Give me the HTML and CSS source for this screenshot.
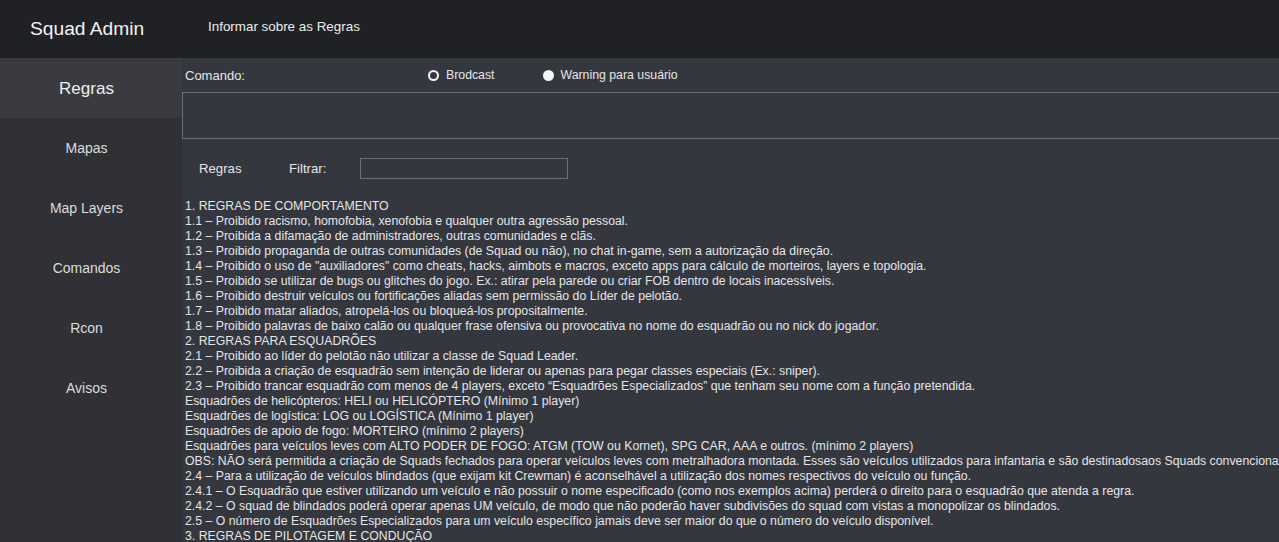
FILE: index.html
```html
<!DOCTYPE html>
<html lang="pt">
<head>
<meta charset="utf-8">
<title>Squad Admin</title>
<link rel="stylesheet" href="styles.css">
</head>
<body>
<header class="topbar">
  <div class="brand">Squad Admin</div>
  <div class="page-title">Informar sobre as Regras</div>
</header>
<div class="layout">
  <nav class="sidebar">
    <a class="nav-item active">Regras</a>
    <a class="nav-item">Mapas</a>
    <a class="nav-item">Map Layers</a>
    <a class="nav-item">Comandos</a>
    <a class="nav-item">Rcon</a>
    <a class="nav-item">Avisos</a>
  </nav>
  <main class="main">
    <div class="command-row">
      <span class="command-label">Comando:</span>
      <label class="radio"><span class="dot dot-empty"></span>Brodcast</label>
      <label class="radio"><span class="dot dot-full"></span>Warning para usuário</label>
    </div>
    <div class="command-box"></div>
    <div class="filter-row">
      <span class="filter-title">Regras</span>
      <span class="filter-label">Filtrar:</span>
      <div class="filter-input"></div>
    </div>
    <div class="rules">
      <div>1. REGRAS DE COMPORTAMENTO</div>
      <div>1.1 – Proibido racismo, homofobia, xenofobia e qualquer outra agressão pessoal.</div>
      <div>1.2 – Proibida a difamação de administradores, outras comunidades e clãs.</div>
      <div>1.3 – Proibido propaganda de outras comunidades (de Squad ou não), no chat in-game, sem a autorização da direção.</div>
      <div>1.4 – Proibido o uso de "auxiliadores" como cheats, hacks, aimbots e macros, exceto apps para cálculo de morteiros, layers e topologia.</div>
      <div>1.5 – Proibido se utilizar de bugs ou glitches do jogo. Ex.: atirar pela parede ou criar FOB dentro de locais inacessíveis.</div>
      <div>1.6 – Proibido destruir veículos ou fortificações aliadas sem permissão do Líder de pelotão.</div>
      <div>1.7 – Proibido matar aliados, atropelá-los ou bloqueá-los propositalmente.</div>
      <div>1.8 – Proibido palavras de baixo calão ou qualquer frase ofensiva ou provocativa no nome do esquadrão ou no nick do jogador.</div>
      <div>2. REGRAS PARA ESQUADRÕES</div>
      <div>2.1 – Proibido ao líder do pelotão não utilizar a classe de Squad Leader.</div>
      <div>2.2 – Proibida a criação de esquadrão sem intenção de liderar ou apenas para pegar classes especiais (Ex.: sniper).</div>
      <div>2.3 – Proibido trancar esquadrão com menos de 4 players, exceto “Esquadrões Especializados” que tenham seu nome com a função pretendida.</div>
      <div>Esquadrões de helicópteros: HELI ou HELICÓPTERO (Mínimo 1 player)</div>
      <div>Esquadrões de logística: LOG ou LOGÍSTICA (Mínimo 1 player)</div>
      <div>Esquadrões de apoio de fogo: MORTEIRO (mínimo 2 players)</div>
      <div>Esquadrões para veículos leves com ALTO PODER DE FOGO: ATGM (TOW ou Kornet), SPG CAR, AAA e outros. (mínimo 2 players)</div>
      <div>OBS: NÃO será permitida a criação de Squads fechados para operar veículos leves com metralhadora montada. Esses são veículos utilizados para infantaria e são destinadosaos Squads convencionais.</div>
      <div>2.4 – Para a utilização de veículos blindados (que exijam kit Crewman) é aconselhável a utilização dos nomes respectivos do veículo ou função.</div>
      <div>2.4.1 – O Esquadrão que estiver utilizando um veículo e não possuir o nome especificado (como nos exemplos acima) perderá o direito para o esquadrão que atenda a regra.</div>
      <div>2.4.2 – O squad de blindados poderá operar apenas UM veículo, de modo que não poderão haver subdivisões do squad com vistas a monopolizar os blindados.</div>
      <div>2.5 – O número de Esquadrões Especializados para um veículo específico jamais deve ser maior do que o número do veículo disponível.</div>
      <div>3. REGRAS DE PILOTAGEM E CONDUÇÃO</div>
    </div>
  </main>
</div>
</body>
</html>
```
FILE: styles.css
```css
* { box-sizing: border-box; }
html, body {
  margin: 0;
  padding: 0;
  height: 100%;
  overflow: hidden;
}
body {
  background: #35373e;
  color: #e4e5e7;
  font-family: "Liberation Sans", Arial, sans-serif;
  font-size: 12.3px;
}
.topbar {
  height: 58px;
  background: #202125;
  display: flex;
  align-items: center;
}
.brand {
  width: 208px;
  padding-left: 30px;
  font-size: 19.2px;
  color: #f2f2f2;
}
.page-title {
  font-size: 13.4px;
  color: #ececec;
  margin-top: -5px;
}
.layout {
  display: flex;
  height: calc(100% - 58px);
}
.sidebar {
  width: 182px;
  flex: none;
  background: #303136;
  display: flex;
  flex-direction: column;
}
.nav-item {
  height: 60px;
  display: flex;
  align-items: center;
  justify-content: center;
  padding-right: 9px;
  font-size: 14px;
  color: #dcdcdc;
}
.nav-item.active {
  background: #3a3b40;
  font-size: 17px;
  color: #eeeeee;
  padding-top: 1px;
}
.main {
  flex: 1;
  min-width: 0;
  overflow: hidden;
}
.command-row {
  height: 34px;
  display: flex;
  align-items: center;
  padding-left: 3px;
  font-size: 13px;
}
.command-label { width: 243px; }
.radio {
  display: flex;
  align-items: center;
  font-size: 12.3px;
  margin-right: 48px;
}
.dot {
  width: 11px;
  height: 11px;
  border-radius: 50%;
  margin-right: 7px;
  background: #f4f4f4;
}
.dot-empty {
  background: #35373e;
  border: 2.5px solid #f4f4f4;
}
.command-box {
  height: 47px;
  border: 1px solid #6c6e73;
  border-right: none;
}
.filter-row {
  height: 58px;
  display: flex;
  align-items: center;
  padding-left: 17px;
  font-size: 13.2px;
  padding-top: 1px;
}
.filter-title { width: 90px; }
.filter-label { width: 71px; }
.filter-input {
  width: 208px;
  height: 21px;
  border: 1px solid #6c6e73;
}
.rules {
  padding-left: 3px;
  padding-top: 2px;
  line-height: 15px;
  white-space: nowrap;
}
```
